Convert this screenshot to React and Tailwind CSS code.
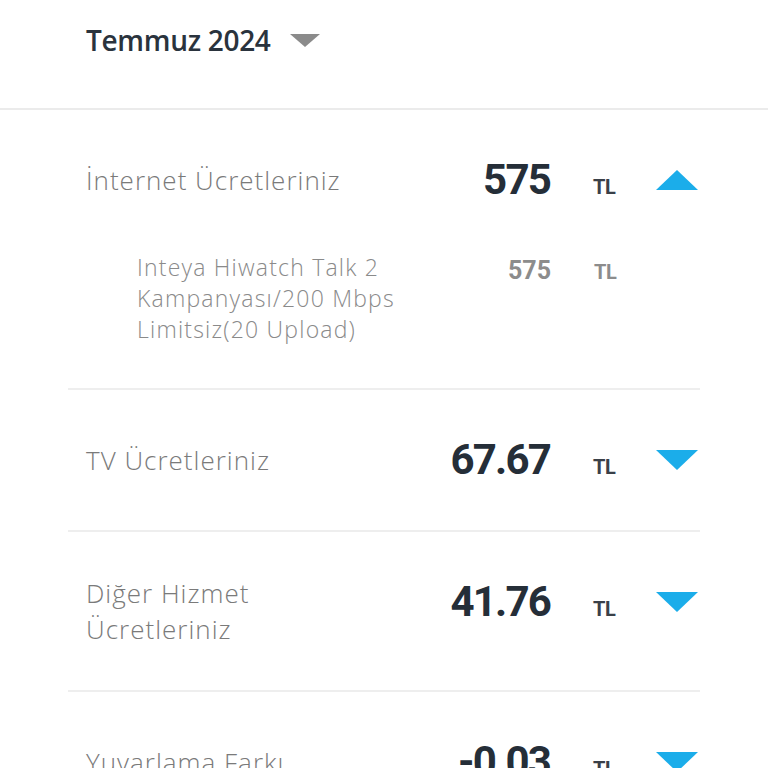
import React from 'react';

const rows = [
  {
    label: ['İnternet Ücretleriniz'],
    value: '575',
    open: true,
    items: [{ text: ['Inteya Hiwatch Talk 2', 'Kampanyası/200 Mbps', 'Limitsiz(20 Upload)'], value: '575' }],
  },
  { label: ['TV Ücretleriniz'], value: '67.67' },
  { label: ['Diğer Hizmet', 'Ücretleriniz'], value: '41.76' },
  { label: ['Yuvarlama Farkı'], value: '-0.03' },
];

function Caret({ up }) {
  return (
    <svg width="42" height="20" viewBox="0 0 42 20" className="shrink-0">
      <path d={up ? 'M0 20 L21 0 L42 20 Z' : 'M0 0 L42 0 L21 20 Z'} fill="#1badea" />
    </svg>
  );
}

function Amount({ value, muted }) {
  return (
    <div className="flex items-baseline">
      <span
        className={`w-[130px] text-right font-[Roboto,sans-serif] ${
          muted ? 'text-[25px] font-bold text-[#8c8c8c]' : 'text-[42px] font-bold tracking-[-1.8px] text-[#252e38] leading-[54px]'
        }`}
      >
        {value}
      </span>
      <span
        className={`ml-[43px] w-[23px] font-[Roboto,sans-serif] text-[20px] font-bold tracking-[-0.5px] ${
          muted ? 'text-[#8c8c8c]' : 'text-[#3a4048]'
        }`}
      >
        TL
      </span>
    </div>
  );
}

export default function App() {
  return (
    <div className="min-h-screen bg-white font-['Open_Sans',sans-serif]">
      {/* Month picker */}
      <div className="h-[110px] flex items-center pl-[86px] pb-[28px] border-b-2 border-[#ebebeb]">
        <span className="text-[28px] font-semibold text-[#2a333d] tracking-[-0.3px]">Temmuz 2024</span>
        <svg width="30" height="13" viewBox="0 0 30 13" className="ml-[19px]">
          <path d="M0 0 L30 0 L15 13 Z" fill="#8b8b8b" />
        </svg>
      </div>

      <div className="mx-[68px]">
        {rows.map((row, i) => (
          <div key={i} className={`py-[43px] pl-[18px] pr-[2px] ${i < rows.length - 1 ? 'border-b-2 border-[#eeeeee]' : ''}`}>
            <div className="flex items-start">
              <div className="flex-1 min-h-[54px] flex flex-col justify-center text-[26px] font-light tracking-[1px] leading-[36px] text-[#7a7a7a]">
                {row.label.map((l) => (
                  <div key={l}>{l}</div>
                ))}
              </div>
              <Amount value={row.value} />
              <div className="ml-[40px] h-[54px] flex items-center">
                <Caret up={row.open} />
              </div>
            </div>
            {row.items &&
              row.items.map((it, j) => (
                <div key={j} className="mt-[45px] flex items-start pl-[51px] pr-[81px]">
                  <div className="flex-1 text-[23px] font-light tracking-[1.2px] leading-[31px] text-[#8a8a8a]">
                    {it.text.map((t) => (
                      <div key={t}>{t}</div>
                    ))}
                  </div>
                  <Amount value={it.value} muted />
                </div>
              ))}
          </div>
        ))}
      </div>
    </div>
  );
}
